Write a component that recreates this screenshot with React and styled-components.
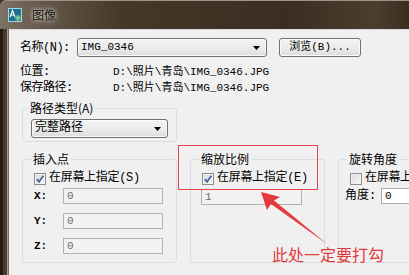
import React from "react";
import styled, { createGlobalStyle } from "styled-components";

const GlobalStyle = createGlobalStyle`
  * { box-sizing: border-box; }
  html, body { margin: 0; padding: 0; background: #f0f0f0; }
  body {
    width: 409px;
    height: 275px;
    overflow: hidden;
    font-family: "Liberation Mono", "Noto Sans CJK SC", monospace;
    font-size: 12px;
    color: #000;
  }
`;

const Window = styled.div`
  position: relative;
  width: 409px;
  height: 275px;
  display: flex;
  flex-direction: column;
  background: #3e3022;
  overflow: hidden;
`;

const TitleBar = styled.div`
  height: 29px;
  flex: none;
  display: flex;
  align-items: center;
  gap: 10px;
  padding-left: 8px;
  border-top: 1px solid #9a948d;
  border-top-left-radius: 6px;
  background: linear-gradient(
    90deg,
    #7d7165 0%,
    #66584a 10%,
    #463728 30%,
    #3b2d20 70%,
    #4c3d2e 92%,
    #3b2d20 100%
  );
`;

const Title = styled.span`
  font-family: "Noto Sans CJK SC", sans-serif;
  font-size: 12px;
  line-height: 14px;
  color: #111;
  text-shadow: 0 0 6px rgba(235, 230, 220, 0.9), 0 0 3px rgba(235, 230, 220, 0.8);
`;

const Frame = styled.div`
  flex: 1;
  display: flex;
  min-height: 0;
`;

const SideEdge = styled.div`
  width: 9px;
  flex: none;
  background: linear-gradient(
    90deg,
    #241a11 0 3px,
    #4b3a2a 3px 7px,
    #a49d95 7px 8px,
    #6f6a66 8px 9px
  );
`;

const Content = styled.div`
  flex: 1;
  min-width: 0;
  background: #f0f0f0;
  border-top: 1px solid #d9d9d9;
  padding: 8px 0 0 11px;
  display: flex;
  flex-direction: column;
  overflow: hidden;
`;

const NameRow = styled.div`
  display: flex;
  align-items: center;
  height: 19px;
`;

const FieldLabel = styled.span`
  width: ${(p) => p.$w}px;
  flex: none;
  line-height: 16px;
  letter-spacing: -0.5px;
  white-space: nowrap;
`;

const Combo = styled.div`
  width: ${(p) => p.$w}px;
  height: 19px;
  flex: none;
  display: flex;
  align-items: center;
  justify-content: space-between;
  padding: 0 6px 0 3px;
  border: 1px solid #707070;
  border-radius: 3px;
  background: linear-gradient(#f4f4f4 0%, #ececec 50%, #dcdcdc 100%);
  box-shadow: inset 0 0 0 1px #fbfbfb;
  font-size: ${(p) => p.$size || 11}px;
  line-height: 15px;
  white-space: nowrap;
`;

const Button = styled.div`
  width: 82px;
  height: 19px;
  margin-left: 12px;
  flex: none;
  display: flex;
  align-items: center;
  justify-content: center;
  border: 1px solid #707070;
  border-radius: 3px;
  background: linear-gradient(#f4f4f4 0%, #ececec 50%, #dcdcdc 100%);
  box-shadow: inset 0 0 0 1px #fbfbfb;
  font-size: 11px;
  line-height: 15px;
`;

const InfoRow = styled.div`
  display: flex;
  height: 16px;
  margin-top: ${(p) => p.$mt}px;
  line-height: 16px;
  white-space: nowrap;
`;

const Value = styled.span`
  font-size: 11px;
`;

const Group = styled.fieldset`
  margin: ${(p) => p.$mt || 0}px 0 0 ${(p) => p.$ml || 0}px;
  width: ${(p) => p.$w}px;
  flex: none;
  min-width: 0;
  padding: ${(p) => p.$pad};
  border: 1px solid #d5dfe5;
  border-radius: 3px;
  display: flex;
  flex-direction: column;
`;

const Legend = styled.legend`
  margin-left: -3px;
  padding: 0 2px;
  line-height: 14px;
  font-family: "Noto Sans CJK SC", sans-serif;
  font-size: 12px;
  white-space: nowrap;
`;

const GroupRow = styled.div`
  display: flex;
  margin: 10px 0 0 2px;
`;

const CheckRow = styled.label`
  display: flex;
  align-items: center;
  gap: 3px;
  height: 15px;
  white-space: nowrap;
  line-height: 15px;
`;

const Box = styled.span`
  width: 12px;
  height: 12px;
  flex: none;
  display: inline-flex;
  align-items: center;
  justify-content: center;
  border: 1px solid #8f8f8f;
  background: linear-gradient(135deg, #d6d6d6, #fafafa);
  box-shadow: inset 0 0 0 1px #f2f2f2;
`;

const CheckText = styled.span`
  font-size: 12px;
  letter-spacing: -0.3px;
`;

const CoordRow = styled.div`
  display: flex;
  align-items: center;
  margin-top: ${(p) => p.$mt}px;
  margin-left: ${(p) => p.$ml || 0}px;
`;

const CoordLabel = styled.span`
  width: ${(p) => p.$w}px;
  flex: none;
  line-height: 16px;
  font-weight: ${(p) => (p.$bold ? 700 : 400)};
  font-size: ${(p) => (p.$bold ? 11 : 12)}px;
  white-space: nowrap;
`;

const TextBox = styled.div`
  width: ${(p) => p.$w}px;
  height: 16px;
  flex: none;
  padding-left: 3px;
  border: 1px solid ${(p) => (p.$on ? "#abadb3" : "#b3b3b3")};
  background: ${(p) => (p.$on ? "#ffffff" : "#f2f2f2")};
  color: ${(p) => (p.$on ? "#000" : "#6d6d6d")};
  font-size: 11px;
  line-height: 14px;
`;

const Highlight = styled.div`
  position: absolute;
  left: 178px;
  top: 145px;
  width: 140px;
  height: 45px;
  border: 1px solid #e2474c;
  pointer-events: none;
`;

const Pointer = styled.svg`
  position: absolute;
  left: 255px;
  top: 186px;
  pointer-events: none;
`;

const Note = styled.div`
  position: absolute;
  left: 272px;
  top: 244px;
  font-family: "Noto Sans CJK SC", sans-serif;
  font-size: 16px;
  line-height: 20px;
  color: #e4393c;
  white-space: nowrap;
`;

const AppIcon = () => (
  <svg width="14" height="14" viewBox="0 0 14 14">
    <rect x="0" y="0" width="14" height="14" fill="#1f6f8f" />
    <rect x="0.5" y="0.5" width="13" height="13" fill="none" stroke="#9fd3e6" />
    <path d="M2 9 L4.5 2.5 L7 9 M3 7 H6" stroke="#fff" strokeWidth="1.2" fill="none" />
    <rect x="7.5" y="7.5" width="5" height="5" fill="#4fb06a" />
    <path d="M7.5 10 H12.5 M10 7.5 V12.5" stroke="#fff" strokeWidth="0.8" strokeDasharray="1 1" />
  </svg>
);

const DropArrow = () => (
  <svg width="7" height="4" viewBox="0 0 7 4">
    <path d="M0 0 H7 L3.5 4 Z" fill="#000" />
  </svg>
);

const Check = ({ on }) => (
  <Box>
    {on && (
      <svg width="10" height="10" viewBox="0 0 10 10">
        <path d="M1.8 5.2 L4 7.8 L8.4 1.8" stroke="#4a66a3" strokeWidth="1.8" fill="none" />
      </svg>
    )}
  </Box>
);

export default function App() {
  return (
    <>
      <GlobalStyle />
      <Window>
        <TitleBar>
          <AppIcon />
          <Title>图像</Title>
        </TitleBar>
        <Frame>
          <SideEdge />
          <Content>
            <NameRow>
              <FieldLabel $w={57}>名称(N):</FieldLabel>
              <Combo $w={190}>
                <span>IMG_0346</span>
                <DropArrow />
              </Combo>
              <Button>浏览(B)...</Button>
            </NameRow>
            <InfoRow $mt={7}>
              <FieldLabel $w={93}>位置:</FieldLabel>
              <Value>D:\照片\青岛\IMG_0346.JPG</Value>
            </InfoRow>
            <InfoRow $mt={0}>
              <FieldLabel $w={93}>保存路径:</FieldLabel>
              <Value>D:\照片\青岛\IMG_0346.JPG</Value>
            </InfoRow>

            <Group $w={155} $mt={5} $ml={2} $pad="4px 8px 3px 8px">
              <Legend>路径类型(A)</Legend>
              <Combo $w={137} $size={12}>
                <span>完整路径</span>
                <DropArrow />
              </Combo>
            </Group>

            <GroupRow>
              <Group $w={155} $pad="5px 8px 8px 11px">
                <Legend>插入点</Legend>
                <CheckRow>
                  <Check on />
                  <CheckText>在屏幕上指定(S)</CheckText>
                </CheckRow>
                <CoordRow $mt={2}>
                  <CoordLabel $w={29} $bold>X:</CoordLabel>
                  <TextBox $w={100}>0</TextBox>
                </CoordRow>
                <CoordRow $mt={9}>
                  <CoordLabel $w={29} $bold>Y:</CoordLabel>
                  <TextBox $w={100}>0</TextBox>
                </CoordRow>
                <CoordRow $mt={9}>
                  <CoordLabel $w={29} $bold>Z:</CoordLabel>
                  <TextBox $w={100}>0</TextBox>
                </CoordRow>
              </Group>

              <Group $w={135} $ml={13} $pad="5px 8px 8px 11px">
                <Legend>缩放比例</Legend>
                <CheckRow>
                  <Check on />
                  <CheckText>在屏幕上指定(E)</CheckText>
                </CheckRow>
                <CoordRow $mt={3} $ml={-1}>
                  <TextBox $w={101}>1</TextBox>
                </CoordRow>
              </Group>

              <Group $w={110} $ml={13} $pad="5px 8px 8px 11px">
                <Legend>旋转角度</Legend>
                <CheckRow>
                  <Check />
                  <CheckText>在屏幕上指定(R)</CheckText>
                </CheckRow>
                <CoordRow $mt={2} $ml={-5}>
                  <CoordLabel $w={36}>角度:</CoordLabel>
                  <TextBox $w={80} $on>0</TextBox>
                </CoordRow>
              </Group>
            </GroupRow>
          </Content>
        </Frame>

        <Highlight />
        <Pointer width="76" height="62" viewBox="0 0 76 62">
          <polygon
            points="6,6 25,11 19,14.5 72,58 16,18 12,24"
            fill="#e53a3b"
          />
        </Pointer>
        <Note>此处一定要打勾</Note>
      </Window>
    </>
  );
}
